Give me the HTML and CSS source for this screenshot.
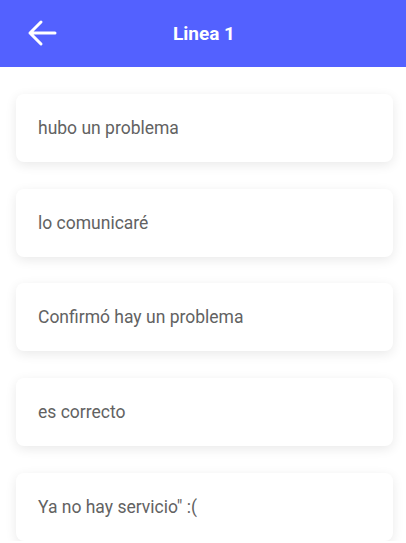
FILE: index.html
```html
<!DOCTYPE html>
<html lang="es">
<head>
<meta charset="utf-8">
<title>Linea 1</title>
<link rel="stylesheet" href="styles.css">
</head>
<body>
<header class="topbar">
  <button class="back" aria-label="Volver">
    <svg width="30" height="30" viewBox="0 0 30 30" fill="none" stroke="#fff" stroke-width="3" stroke-linecap="round" stroke-linejoin="round">
      <path d="M28 15H3M3 15L14 4M3 15l11 11"/>
    </svg>
  </button>
  <h1 class="title">Linea 1</h1>
</header>
<main class="list">
  <div class="card">hubo un problema</div>
  <div class="card">lo comunicaré</div>
  <div class="card">Confirmó hay un problema</div>
  <div class="card">es correcto</div>
  <div class="card">Ya no hay servicio" :(</div>
</main>
</body>
</html>
```
FILE: styles.css
```css
* { box-sizing: border-box; }
html, body { margin: 0; padding: 0; }
body {
  font-family: Roboto, "Liberation Sans", sans-serif;
  background: #fff;
  overflow: hidden;
}
.topbar {
  height: 67px;
  background: #5361ff;
  display: flex;
  align-items: center;
  position: relative;
  justify-content: center;
}
.back {
  position: absolute;
  left: 27px;
  top: 18px;
  padding: 0;
  border: 0;
  background: none;
  display: flex;
}
.title {
  margin: 0 0 1px 2px;
  color: #fff;
  font-size: 19px;
  font-weight: 700;
}
.list {
  padding: 27px 13px 0 16px;
  display: flex;
  flex-direction: column;
  gap: 26.7px;
}
.card {
  height: 68px;
  background: #fff;
  border-radius: 8px;
  box-shadow: 0 3px 12px rgba(0,0,0,0.09);
  display: flex;
  align-items: center;
  padding-left: 22px;
  font-size: 17.5px;
  color: #626262;
}
```
